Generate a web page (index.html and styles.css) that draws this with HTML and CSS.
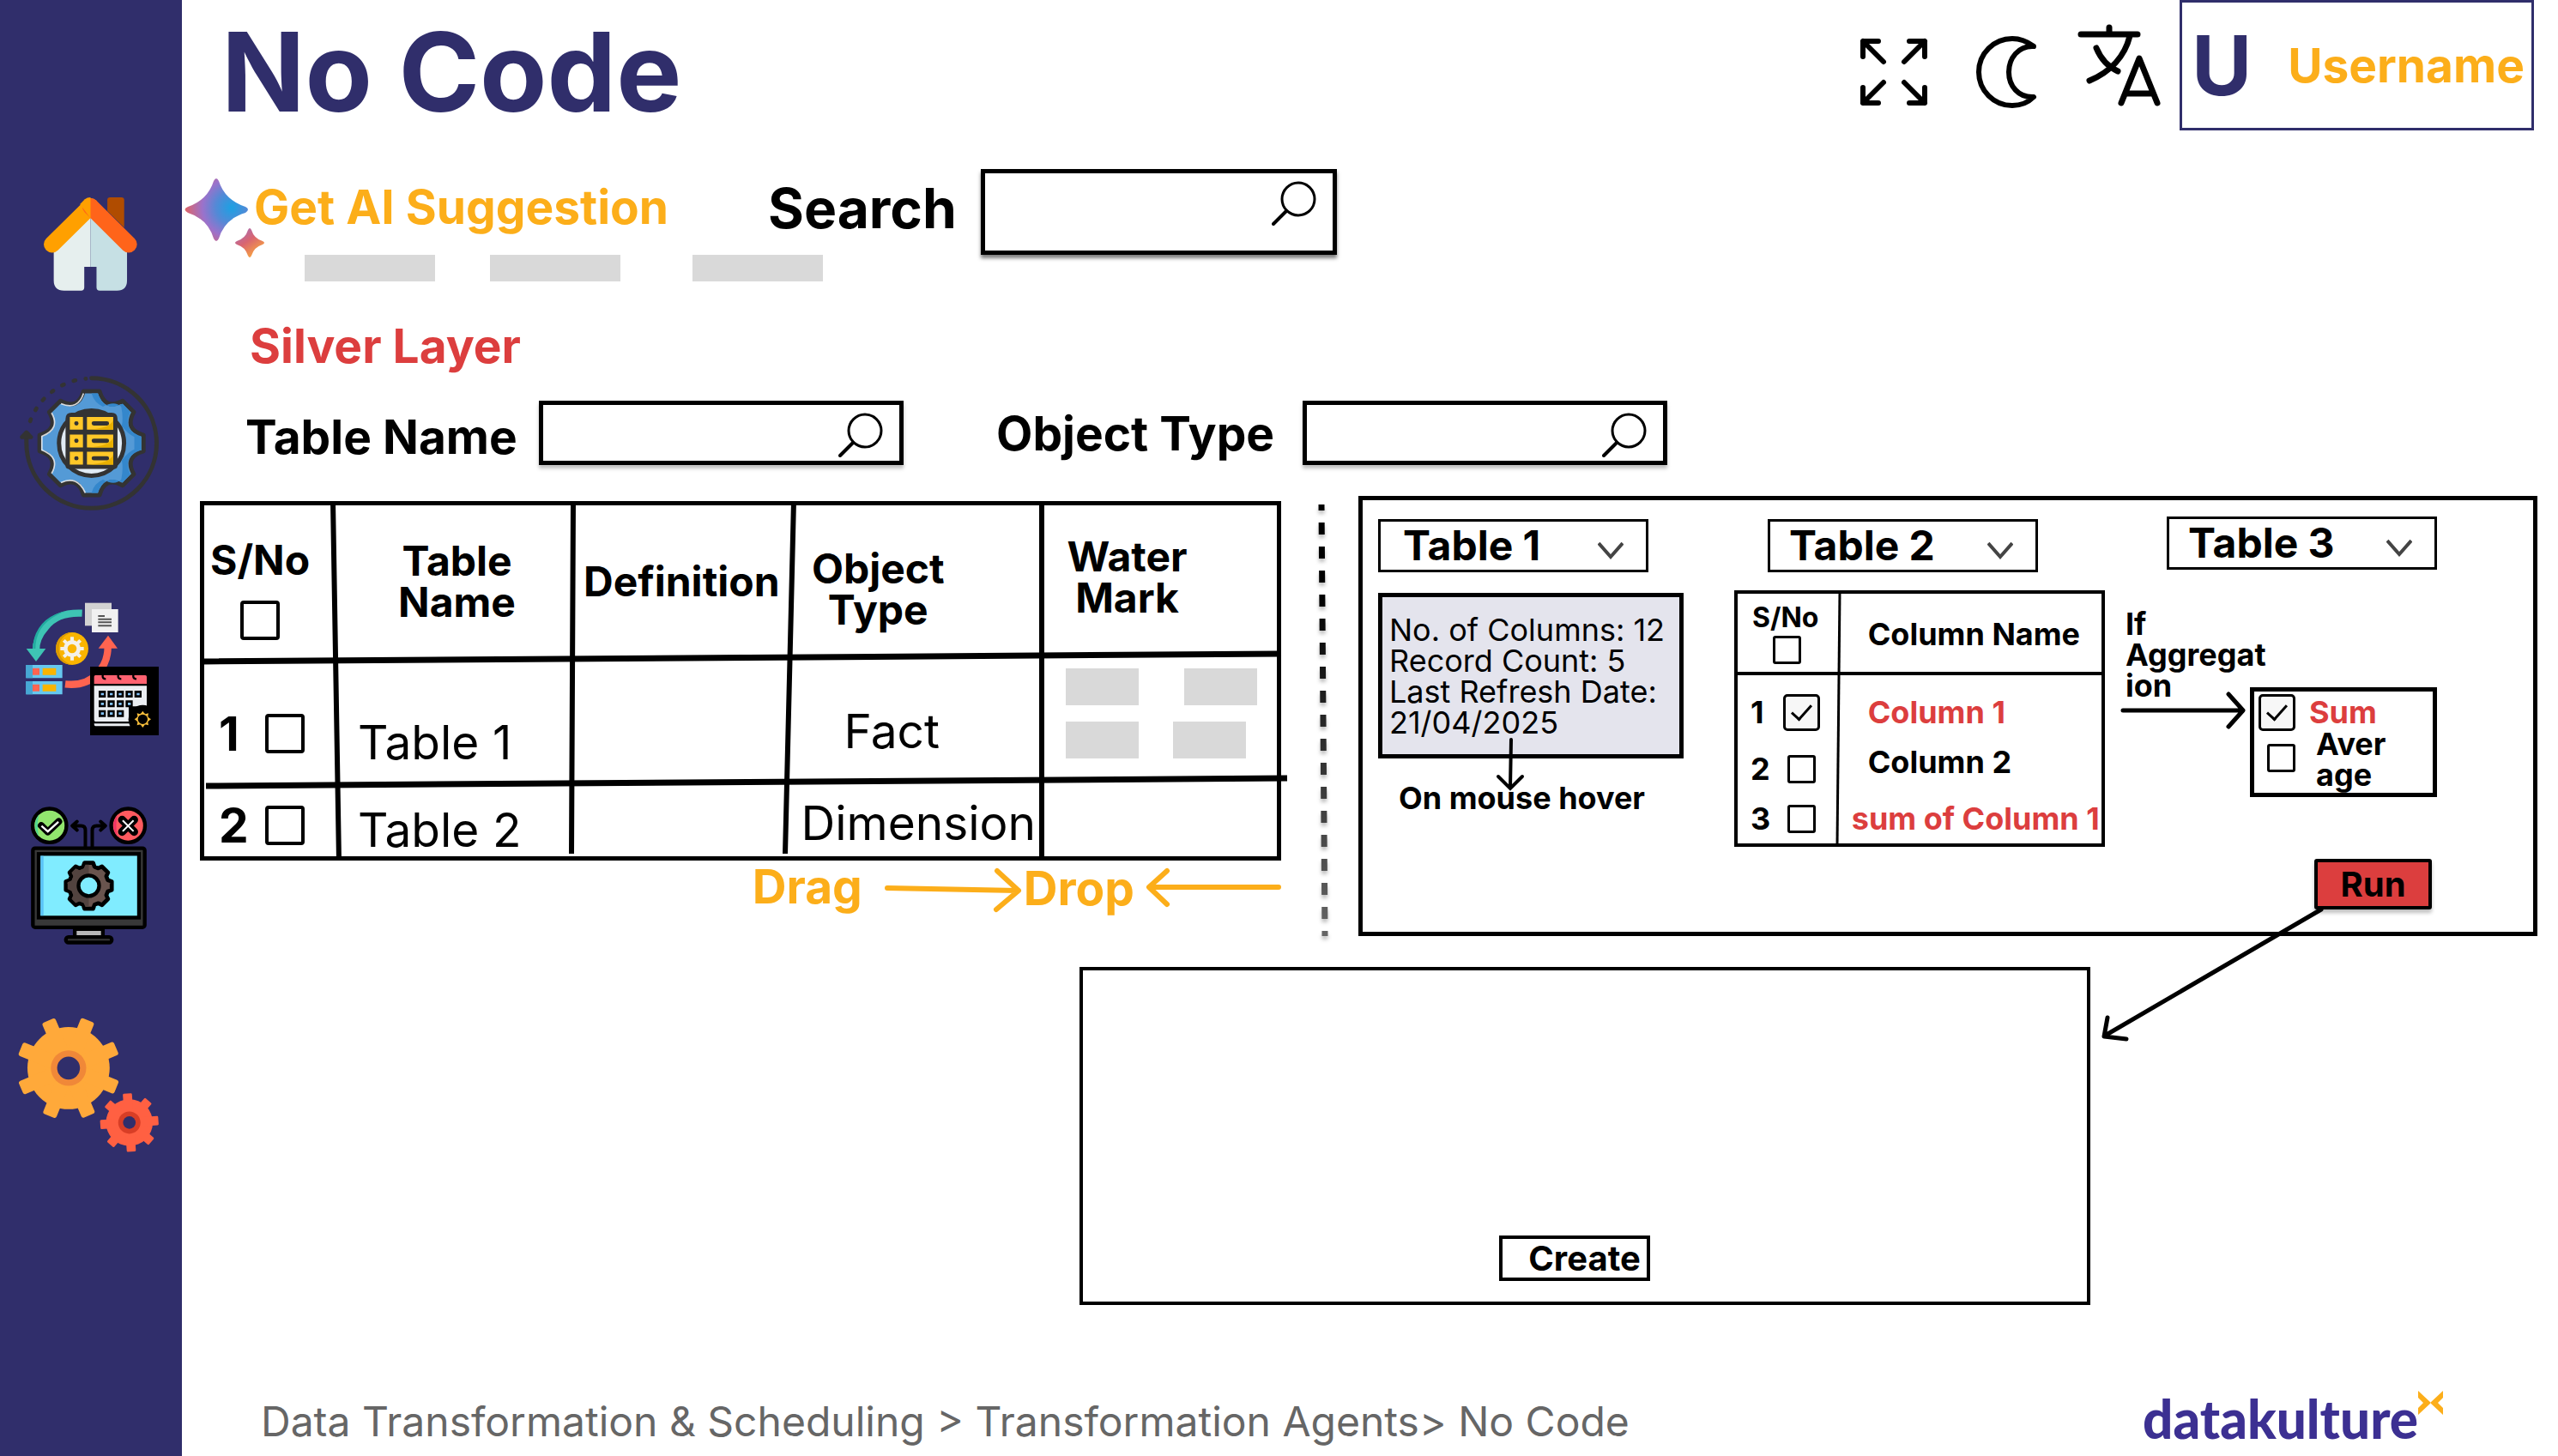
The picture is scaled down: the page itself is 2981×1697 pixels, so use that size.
FILE: index.html
```html
<!DOCTYPE html>
<html lang="en">
<head>
<meta charset="utf-8">
<title>No Code</title>
<meta name="viewport" content="width=device-width, initial-scale=1">
<link rel="stylesheet" href="styles.css">
</head>
<body>
<svg class="defs" aria-hidden="true">
  <defs>
    <symbol id="search" viewBox="0 0 52 52">
      <circle cx="31" cy="21" r="19" fill="none" stroke="#000" stroke-width="3"/>
      <path d="M17 35 2 50" fill="none" stroke="#000" stroke-width="4" stroke-linecap="round"/>
    </symbol>
    <symbol id="chevron" viewBox="0 0 30 24">
      <path d="M1 3 15 19 29 3" fill="none" stroke="#444" stroke-width="4"/>
    </symbol>
  </defs>
</svg>
<div class="app">
  <nav class="sidebar" aria-label="Main">
    <a href="#home" class="nav-link nav-home" aria-label="Home">
      <svg viewBox="153 150 328 328" width="109" height="109">
        <path d="M376 160q0-10 10-10h39q10 0 10 10v96l-59-58z" fill="#b04c00"/>
        <path d="M188 335 317 210V394H295V466Q295 477 284 477H224Q188 477 188 441z" fill="#e6efee"/>
        <path d="M445 335 317 210V394H338V466Q338 477 349 477H410Q445 477 445 441z" fill="#c6e0e4"/>
        <path d="M182 315 317 182" stroke="#ffa000" stroke-width="58" stroke-linecap="round"/>
        <path d="M317 182 451 315" stroke="#ff641a" stroke-width="58" stroke-linecap="round"/>
        <path d="M317 150Q305 150 297 157L280 174 317 224z" fill="#ffa000"/>
      </svg>
    </a>
    <a href="#data" class="nav-link nav-data" aria-label="Data">
      <svg viewBox="69 775 486 472" width="162" height="157">
        <path d="M320 783A228 228 0 1 1 92 1011V985" fill="none" stroke="#333" stroke-width="15" stroke-linecap="round"/>
        <path d="M76 990 92 973 108 990z" fill="#333" stroke="#333" stroke-width="14" stroke-linejoin="round"/>
        <path d="M105 934A228 228 0 0 1 300 785" fill="none" stroke="#333" stroke-width="14" stroke-linecap="round" stroke-dasharray="7 36"/>
        <g transform="translate(320 1011)">
          <path d="M-28-182H28Q47-114 109-148L148-109Q114-47 182-28V28Q114 47 148 109L109 148Q47 114 28 182H-28Q-47 114-109 148L-148 109Q-114 47-182 28V-28Q-114-47-148-109L-109-148Q-47-114-28-182z" fill="#549ad6" stroke="#333" stroke-width="15" stroke-linejoin="round"/>
          <path d="M0-174H22Q47-106 109-138L136-109Q106-47 174-24V24Q106 47 136 109L109 138Q47 106 22 174H0Q10 140 40 128Q80 150 104 128Q112 90 106 60Q130 30 150 22V-22Q130-30 106-60Q112-90 104-128Q80-150 40-128Q10-140 0-174z" fill="#3487cc"/>
          <path d="M-28-174Q-47-114-107-138M-140-106Q-108-50-174-24V24Q-108 50-140 106M-107 138Q-50 112-22 174" fill="none" stroke="#fff" stroke-width="5" opacity=".8"/>
          <circle r="114" fill="#e0ebf5" stroke="#333" stroke-width="15"/>
          <path d="M-91 78V-85Q-91-107-70-107H70Q91-107 91-85V78Q91 90 80 90H-80Q-91 90-91 78z" fill="#333"/>
        </g>
        <path d="M244 919h46v45h-46zM244 981h46v45h-46zM244 1041h46v45h-46zM304 919h92v45h-92zM304 981h92v45h-92zM304 1041h92v45h-92z" fill="#ffc828"/>
        <path d="M396 930v34h-90q80-4 90-34zM396 991v35h-90q80-4 90-35zM396 1051v35h-90q80-4 90-35z" fill="#e8b000"/>
        <path d="M328 942h46M328 1003h46M328 1064h46M267 942h.1M267 1003h.1M267 1064h.1" stroke="#333" stroke-width="15" stroke-linecap="round"/>
      </svg>
    </a>
    <a href="#schedule" class="nav-link nav-schedule" aria-label="Transformation and scheduling">
      <svg viewBox="90 66 465 465" width="155" height="155">
        <path d="M297 68h93v80h-93z" fill="#d2d2d2"/>
        <path d="M321 90h92v81h-92z" fill="#f1f1f1"/>
        <path d="M343 114h23M343 125h47M343 136h47M343 148h47" stroke="#555" stroke-width="6"/>
        <path d="M287 104Q200 100 160 152Q124 192 126 236" fill="none" stroke="#3ec4b4" stroke-width="25"/>
        <path d="M262 93Q160 100 126 174Q114 202 115 232H124Q122 150 200 110Q230 94 262 93z" fill="#22aca0"/>
        <path d="M92 228H160L126 273z" fill="#3ec4b4"/>
        <circle cx="252" cy="228" r="57" fill="#fab400"/>
        <path d="M252 171A57 57 0 0 0 252 285Q206 270 206 228T252 171z" fill="#dc9a00"/>
        <circle cx="252" cy="228" r="23" fill="none" stroke="#f4f1ea" stroke-width="14"/>
        <path d="M252 187v14M252 255v14M211 228h14M279 228h14M223 199l10 10M271 247l10 10M223 257l10-10M271 209l10-10" stroke="#f4f1ea" stroke-width="12"/>
        <path d="M228 352Q300 360 340 316Q378 276 377 220" fill="none" stroke="#ff6450" stroke-width="25"/>
        <path d="M344 227 378 182 411 227z" fill="#ff6450"/>
        <path d="M91 285H218V331H91zM91 342H218V388H91z" fill="#66c8f0"/>
        <path d="M91 285H114V331H91zM91 342H114V388H91z" fill="#46a8d4"/>
        <path d="M114 296h24v24h-24zM114 353h24v24h-24z" fill="#ff6450"/>
        <path d="M149 296h47v24h-47zM149 353h47v24h-47z" fill="#fab400"/>
        <path d="M315 291H555V531H315z" fill="#000"/>
        <path d="M329 326q0-5 5-5h174q5 0 5 5v25H329z" fill="#ff6270"/>
        <path d="M359 319v8q2 7 11 7M413 319v8q2 7 11 7M466 319v8q2 7 11 7" fill="none" stroke="#000" stroke-width="7"/>
        <path d="M329 358H513V430H450V483H334Q329 483 329 478zM329 490H455V499H334Q329 499 329 490z" fill="#ebeef2"/>
        <path d="M345 375h25v24h-25zM376 375h25v24h-25zM408 375h25v24h-25zM439 375h25v24h-25zM470 375h25v24h-25zM345 409h25v24h-25zM376 409h25v24h-25zM408 409h25v24h-25zM439 409h25v24h-25zM345 443h25v24h-25zM376 443h25v24h-25zM408 443h25v24h-25z" fill="#000"/>
        <path d="M353 383h10v8h-10zM384 383h10v8h-10zM415 383h10v8h-10zM447 383h10v8h-10zM478 383h10v8h-10zM353 417h10v8h-10zM384 417h10v8h-10zM415 417h10v8h-10zM447 417h10v8h-10zM353 451h10v8h-10zM384 451h10v8h-10zM415 451h10v8h-10z" fill="#82c4ff"/>
        <circle cx="499" cy="475" r="50" fill="#000"/>
        <circle cx="499" cy="475" r="19" fill="none" stroke="#fac03c" stroke-width="4"/>
        <path d="M492 456l7-10 7 10zM492 494l7 10 7-10zM480 468l-10 7 10 7zM518 468l10 7-10 7zM481 465l-2-11 11 3zM517 465l2-11-11 3zM481 485l-2 11 11-3zM517 485l2 11-11-3z" fill="#fac03c"/>
      </svg>
    </a>
    <a href="#monitor" class="nav-link nav-monitor" aria-label="Monitoring">
      <svg viewBox="107 779 404 481" width="135" height="161">
        <circle cx="172" cy="845" r="59" fill="#92e66e" stroke="#000" stroke-width="13"/>
        <path d="M135 806Q108 845 135 884Q126 845 135 806z" fill="#50d890"/>
        <path d="M143 845 166 867 204 831" fill="none" stroke="#000" stroke-width="24" stroke-linecap="round" stroke-linejoin="round"/>
        <path d="M144 846 166 866 203 832" fill="none" stroke="#fff" stroke-width="7"/>
        <circle cx="446" cy="845" r="59" fill="#ff5a5f" stroke="#000" stroke-width="13"/>
        <path d="M409 806Q382 845 409 884Q400 845 409 806z" fill="#f03264"/>
        <path d="M425 825 467 867M467 825 425 867" stroke="#000" stroke-width="28" stroke-linecap="round"/>
        <path d="M427 827 465 865M465 827 427 865" stroke="#fff" stroke-width="6"/>
        <path d="M297 925V862Q297 846 282 846H252M268 831 251 846 268 861M321 925V862Q321 846 336 846H366M350 831 367 846 350 861" fill="none" stroke="#000" stroke-width="12" stroke-linecap="round" stroke-linejoin="round"/>
        <rect x="114" y="924" width="390" height="276" rx="8" fill="#383838" stroke="#000" stroke-width="13"/>
        <rect x="134" y="944" width="350" height="222" fill="#80ecff" stroke="#000" stroke-width="13"/>
        <path d="M141 951h10v208h-10z" fill="#5ac4f8"/>
        <g transform="translate(309 1055)">
          <path d="M-20-66-15-80H15L20-66 33-61 46-67 67-46 61-33 66-20 80-15V15L66 20 61 33 67 46 46 67 33 61 20 66 15 80H-15L-20 66-33 61-46 67-67 46-61 33-66 20-80 15V-15L-66-20-61-33-67-46-46-67-33-61z" fill="#69544e" stroke="#000" stroke-width="14" stroke-linejoin="round"/>
          <path d="M0-74H-12L-18-60-33-54-46-60-60-46-54-33-60-18-74-12V12L-60 18-54 33-60 46-46 60-33 54-18 60-12 74H0z" fill="#52433f"/>
          <circle r="36" fill="#80ecff" stroke="#000" stroke-width="13"/>
        </g>
        <path d="M260 1206h98v28h-98z" fill="#b8b8b8" stroke="#000" stroke-width="13"/>
        <rect x="229" y="1234" width="160" height="19" rx="9" fill="#383838" stroke="#000" stroke-width="13"/>
      </svg>
    </a>
    <a href="#settings" class="nav-link nav-settings" aria-label="Settings">
      <svg viewBox="66 108 490 470" width="163" height="157">
        <defs>
          <g id="big-teeth"><rect x="-25" y="-181" width="50" height="362" rx="8"/></g>
          <g id="small-teeth"><rect x="-16" y="-102" width="32" height="204" rx="4"/></g>
        </defs>
        <g transform="translate(240 284)" fill="#ffa93a">
          <circle r="144"/>
          <use href="#big-teeth" transform="rotate(22)"/><use href="#big-teeth" transform="rotate(67)"/>
          <use href="#big-teeth" transform="rotate(112)"/><use href="#big-teeth" transform="rotate(157)"/>
          <circle r="62" fill="#f08838"/><circle r="40" fill="#302e6b"/>
        </g>
        <g transform="translate(453 475)" fill="#ff6042">
          <circle r="82"/>
          <use href="#small-teeth" transform="rotate(-4)"/><use href="#small-teeth" transform="rotate(41)"/>
          <use href="#small-teeth" transform="rotate(86)"/><use href="#small-teeth" transform="rotate(131)"/>
          <circle r="39" fill="#d83e26"/><circle r="22" fill="#302e6b"/>
        </g>
      </svg>
    </a>
  </nav>

  <main class="main">
    <header class="topbar">
      <h1 class="title">No Code</h1>
      <div class="actions">
        <button type="button" class="icon-button" aria-label="Full screen">
          <svg viewBox="0 0 78 78" width="78" height="78" fill="none" stroke="#000" stroke-width="6" stroke-linecap="round" stroke-linejoin="round">
            <path d="M21 3H3V21M3 3 27 27M57 3H75V21M75 3 51 27M21 75H3V57M3 75 27 51M57 75H75V57M75 75 51 51"/>
          </svg>
        </button>
        <button type="button" class="icon-button icon-moon" aria-label="Dark mode">
          <svg viewBox="0 0 72 84" width="72" height="84" fill="none" stroke="#000" stroke-width="6" stroke-linejoin="round">
            <path d="M67 12C59 6 50 3 42 3A39 39 0 0 0 42 81C50 81 60 78 67 71C49 72 38 58 38 42S49 11 67 12z"/>
          </svg>
        </button>
        <button type="button" class="icon-button icon-translate" aria-label="Language">
          <svg viewBox="0 0 97 97" width="97" height="97" fill="none" stroke="#000" stroke-width="7" stroke-linecap="round" stroke-linejoin="round">
            <path d="M4 12H70M37 4V12M61 14C55 38 38 56 14 66M22 28C27 40 36 50 47 55M51 92 72 40 93 92M58 81H86"/>
          </svg>
        </button>
        <button type="button" class="user"><span class="user-initial">U</span><span class="user-name">Username</span></button>
      </div>
    </header>

    <section class="toolbar">
      <a href="#suggestions" class="suggest">
        <svg class="sparkle" viewBox="0 0 92 92" width="92" height="92" aria-hidden="true">
          <defs>
            <radialGradient id="g1" gradientUnits="userSpaceOnUse" cx="54" cy="34" r="62">
              <stop offset="0" stop-color="#1ba1e3"/><stop offset=".3" stop-color="#5489d6"/><stop offset=".55" stop-color="#9b72cb"/><stop offset=".85" stop-color="#d96570"/><stop offset="1" stop-color="#f49c46"/>
            </radialGradient>
            <linearGradient id="g2" x1="0" y1="0" x2=".7" y2="1">
              <stop offset="0" stop-color="#9b72cb"/><stop offset=".5" stop-color="#d96570"/><stop offset=".9" stop-color="#f49c46"/>
            </linearGradient>
          </defs>
          <path d="M33 3Q36-3 39 3Q46 25 70 33Q76 36 70 40Q46 47 39 70Q36 76 33 70Q26 47 3 40Q-4 36 3 33Q26 25 33 3z" fill="url(#g1)"/>
          <path d="M73 60Q75 56 77 60Q80 70 90 73Q94 75 90 77Q80 80 77 90Q75 94 73 90Q70 80 60 77Q56 75 60 73Q70 70 73 60z" fill="url(#g2)"/>
        </svg>
        <span>Get AI Suggestion</span>
      </a>
      <label class="search-label" for="q">Search</label>
      <div class="field field-main">
        <input id="q" type="search">
        <svg class="field-icon" width="52" height="52" aria-hidden="true"><use href="#search"/></svg>
      </div>
    </section>
    <div class="chips"><span class="chip"></span><span class="chip"></span><span class="chip"></span></div>

    <h2 class="layer">Silver Layer</h2>

    <section class="filters">
      <label class="filter-label" for="f-name">Table Name</label>
      <div class="field">
        <input id="f-name" type="search">
        <svg class="field-icon" width="52" height="52" aria-hidden="true"><use href="#search"/></svg>
      </div>
      <label class="filter-label filter-type" for="f-type">Object Type</label>
      <div class="field">
        <input id="f-type" type="search">
        <svg class="field-icon" width="52" height="52" aria-hidden="true"><use href="#search"/></svg>
      </div>
    </section>

    <section class="work">
      <div class="source">
        <div class="sketch">
          <table class="tables">
            <colgroup><col class="c-no"><col class="c-name"><col class="c-def"><col class="c-type"><col class="c-mark"></colgroup>
            <thead>
              <tr>
                <th scope="col" class="no-head"><label for="all">S/No</label><input id="all" type="checkbox" class="box"></th>
                <th scope="col" class="name-head">Table<br>Name</th>
                <th scope="col">Definition</th>
                <th scope="col" class="type-head">Object<br>Type</th>
                <th scope="col" class="mark-head">Water<br>Mark</th>
              </tr>
            </thead>
            <tbody>
              <tr>
                <td><div class="pick"><label for="t1">1</label><input id="t1" type="checkbox" class="box"></div></td>
                <td class="name-cell">Table 1</td>
                <td></td>
                <td class="type-cell fact">Fact</td>
                <td class="mark-cell">
                  <div class="marks"><span></span><span></span></div>
                  <div class="marks marks-near"><span></span><span></span></div>
                </td>
              </tr>
              <tr>
                <td><div class="pick"><label for="t2">2</label><input id="t2" type="checkbox" class="box"></div></td>
                <td class="name-cell">Table 2</td>
                <td></td>
                <td class="type-cell">Dimension</td>
                <td></td>
              </tr>
            </tbody>
          </table>
          <svg class="rules" viewBox="0 0 1260 419" preserveAspectRatio="none" aria-hidden="true">
            <path d="M155 0 162 419M435 0 433 411M692 0 682 411M981 0V417" stroke="#000" stroke-width="6"/>
            <path d="M2 187 1260 178M7 332 1267 323" stroke="#000" stroke-width="7"/>
          </svg>
        </div>
        <div class="dragdrop">
          <span>Drag</span>
          <svg width="158" height="52" viewBox="0 0 158 52" fill="none" stroke="#fcae1a" stroke-width="6" aria-hidden="true"><path d="M1 24 152 27M129 4 154 27 128 49" stroke-linecap="round" stroke-linejoin="round"/></svg>
          <span class="drop">Drop</span>
          <svg width="157" height="52" viewBox="0 0 157 52" fill="none" stroke="#fcae1a" stroke-width="6" aria-hidden="true"><path d="M154 23H4M24 4 3 23 24 43" stroke-linecap="round" stroke-linejoin="round"/></svg>
        </div>
      </div>

      <svg class="divider" width="20" height="503" viewBox="0 0 20 503" aria-hidden="true">
        <defs><linearGradient id="fade" gradientUnits="userSpaceOnUse" x1="0" y1="0" x2="0" y2="503"><stop offset=".2"/><stop offset="1" stop-color="#666"/></linearGradient></defs>
        <path d="M7 0 11 503" fill="none" stroke="url(#fade)" stroke-width="7" stroke-dasharray="14 14" stroke-dashoffset="7"/>
      </svg>

      <div class="panel">
        <div class="panel-col">
          <div class="select"><select aria-label="First table"><option>Table 1</option></select><svg width="30" height="24" aria-hidden="true"><use href="#chevron"/></svg></div>
          <div class="info">
            No. of Columns: 12<br>Record Count: 5<br>Last Refresh Date:<br>21/04/2025
            <svg class="info-arrow" width="34" height="62" viewBox="0 0 34 62" fill="none" stroke="#000" stroke-width="4" stroke-linecap="round" aria-hidden="true"><path d="M18 2 17 58M3 45 17 59 31 45"/></svg>
          </div>
          <p class="hover-note">On mouse hover</p>
        </div>

        <div class="panel-col middle">
          <div class="select select-2"><select aria-label="Second table"><option>Table 2</option></select><svg width="30" height="24" aria-hidden="true"><use href="#chevron"/></svg></div>
          <div class="columns-wrap">
            <table class="columns">
              <colgroup><col class="k-no"><col></colgroup>
              <thead><tr><th scope="col" class="k-head"><label for="call">S/No</label><input id="call" type="checkbox" class="box small"></th><th scope="col">Column Name</th></tr></thead>
              <tbody>
                <tr class="first"><td><div class="pick"><label for="c1">1</label><input id="c1" type="checkbox" class="box tick" checked></div></td><td class="red">Column 1</td></tr>
                <tr><td><div class="pick"><label for="c2">2</label><input id="c2" type="checkbox" class="box small"></div></td><td class="raised">Column 2</td></tr>
                <tr><td><div class="pick"><label for="c3">3</label><input id="c3" type="checkbox" class="box small"></div></td><td class="red wide">sum of Column 1</td></tr>
              </tbody>
            </table>
            <svg class="rules" viewBox="0 0 432 299" preserveAspectRatio="none" aria-hidden="true"><path d="M123 2 120 297" stroke="#000" stroke-width="3"/><path d="M2 97H430" stroke="#000" stroke-width="4"/></svg>
          </div>
        </div>

        <div class="panel-col last">
          <div class="select select-3"><select aria-label="Third table"><option>Table 3</option></select><svg width="30" height="24" aria-hidden="true"><use href="#chevron"/></svg></div>
          <p class="aggregate">If<br>Aggregat<br>ion</p>
          <div class="agg-row">
            <svg class="agg-arrow" width="146" height="44" viewBox="0 0 146 44" fill="none" stroke="#000" stroke-width="5" aria-hidden="true"><path d="M3 22H142M126 3 143 22 126 41" stroke-linecap="round" stroke-linejoin="round"/></svg>
            <div class="options">
              <div class="option"><input id="sum" type="checkbox" class="box tick" checked><label for="sum" class="red">Sum</label></div>
              <div class="option option-avg"><input id="avg" type="checkbox" class="box small"><label for="avg">Aver<br>age</label></div>
            </div>
          </div>
          <div class="run-wrap">
            <button type="button" class="run">Run</button>
            <svg class="run-arrow" width="260" height="160" viewBox="0 0 260 160" fill="none" stroke="#000" stroke-width="5" stroke-linecap="round" stroke-linejoin="round" aria-hidden="true"><path d="M257 3 5 150M8 129 4 151 30 154"/></svg>
          </div>
        </div>
      </div>
    </section>

    <section class="result"><button type="button" class="create">Create</button></section>

    <footer class="footer">
      <nav class="crumbs" aria-label="Breadcrumb"><a href="#scheduling">Data Transformation &amp; Scheduling</a> &gt; <a href="#agents">Transformation Agents</a>&gt; <span>No Code</span></nav>
      <div class="brand"><span>datakulture</span><svg width="29" height="28" viewBox="0 0 29 28" aria-hidden="true"><path d="M0 0 15 14 0 28V20L6 14 0 8zM29 0 14 14 29 28V20L23 14 29 8z" fill="#fcae1a"/></svg></div>
    </footer>
  </main>
</div>
</body>
</html>
```

FILE: styles.css
```css
* { box-sizing: border-box; }

body {
  margin: 0;
  background: #fff;
  color: #000;
  font-family: Inter, "Liberation Sans", sans-serif;
  font-size: 36px;
  line-height: 36px;
}

h1, h2, p { margin: 0; }
a { color: inherit; text-decoration: none; }
svg { display: block; flex: none; overflow: visible; }
button, input, select { font: inherit; color: inherit; margin: 0; border-radius: 0; }
button { padding: 0; background: none; border: 0; }
.defs { position: absolute; width: 0; height: 0; }
.red { color: #dc3e3e; }

.app { display: flex; min-height: 100vh; }

/* Sidebar */
.sidebar {
  flex: none;
  width: 212px;
  padding-top: 230px;
  background: #302e6b;
  display: flex;
  flex-direction: column;
}
.nav-link { display: block; }
.nav-home { padding-left: 51px; }
.nav-data { padding-left: 23px; margin-top: 99px; }
.nav-schedule { padding-left: 30px; margin-top: 107px; }
.nav-monitor { padding-left: 36px; margin-top: 83px; }
.nav-settings { padding-left: 22px; margin-top: 85px; }

.main { flex: 1; min-width: 0; padding: 0 24px 12px 21px; }

/* Top bar */
.topbar { display: flex; justify-content: space-between; height: 168px; padding: 0 4px 0 25px; }
.title { font-size: 128px; line-height: 168px; font-weight: 700; color: #302e6b; white-space: nowrap; }
.actions { display: flex; align-items: flex-start; }
.icon-button { margin-top: 45px; }
.icon-moon { margin: 42px 0 0 57px; }
.icon-translate { margin: 28px 22px 0 46px; }
.user {
  display: flex;
  align-items: center;
  justify-content: space-between;
  width: 413px;
  height: 152px;
  padding: 0 8px 0 11px;
  border: 3px solid #302e6b;
}
.user-initial { font-size: 96px; line-height: 96px; font-weight: 700; color: #302e6b; }
.user-name { font-size: 55px; line-height: 56px; font-weight: 700; color: #fcae1a; }

/* Search */
.toolbar { display: flex; align-items: flex-start; height: 100px; margin-top: 29px; }
.suggest {
  display: flex;
  flex: none;
  width: 665px;
  margin-left: -17px;
  font-size: 55px;
  line-height: 88px;
  font-weight: 700;
  color: #fcae1a;
  white-space: nowrap;
}
.sparkle { margin: 11px -12px 0 0; }
.search-label { flex: none; width: 262px; padding-left: 14px; font-size: 64px; line-height: 92px; font-weight: 700; }
.field { position: relative; width: 425px; height: 75px; }
.field input {
  display: block;
  width: 100%;
  height: 100%;
  padding: 0 80px 0 16px;
  border: 5px solid #000;
  background: #fff;
  box-shadow: 0 4px 4px rgba(0, 0, 0, .25);
  appearance: none;
  outline: 0;
}
.field-icon { position: absolute; right: 24px; top: 14px; }
.field-main { width: 415px; height: 100px; }
.field-main input { box-shadow: 0 4px 4px rgba(0, 0, 0, .5); }

.chips { display: flex; padding-left: 122px; }
.chip { width: 152px; height: 31px; margin-right: 64px; background: #d9d9d9; }
.chip:nth-child(2) { margin-right: 84px; }

.layer { margin: 47px 0 0 58px; font-size: 55px; line-height: 56px; font-weight: 700; color: #dc3e3e; }

.filters { display: flex; height: 75px; margin-top: 36px; padding-left: 53px; }
.filter-label { width: 342px; font-size: 55px; line-height: 84px; font-weight: 700; white-space: nowrap; }
.filter-type { width: 357px; margin-left: 108px; line-height: 76px; }

/* Work area */
.work {
  display: grid;
  grid-template-columns: minmax(0, 1260fr) 90px minmax(0, 1374fr);
  align-items: start;
  margin-top: 36px;
}
.source { padding-top: 6px; }
.sketch { position: relative; }
.rules { position: absolute; inset: 0; width: 100%; height: 100%; pointer-events: none; }

.tables {
  width: 100%;
  table-layout: fixed;
  border-collapse: separate;
  border-spacing: 0;
  border: 5px solid #000;
  font-size: 55px;
  line-height: 56px;
}
.c-no { width: 12%; }
.c-name { width: 22%; }
.c-def { width: 21%; }
.c-type { width: 23%; }
.tables th, .tables td { padding: 0; white-space: nowrap; }
.tables th { height: 178px; font-size: 48px; line-height: 48px; font-weight: 700; }
.tables tbody tr:first-child td { height: 145px; }
.tables tbody tr:last-child td { height: 86px; }
.tables .no-head { padding-top: 18px; }
.no-head label { display: block; padding-left: 7px; text-align: left; }
.no-head .box { margin: 23px 0 0 42px; }
.tables .name-head { padding-left: 14px; }
.tables .type-head { padding: 18px 92px 0 0; }
.tables .mark-head { padding: 0 74px 10px 0; }
.pick { display: flex; align-items: center; }
.pick label { flex: none; font-weight: 700; }
.tables .pick { padding: 30px 0 0 17px; }
.tables tr:last-child .pick { padding-top: 14px; }
.tables .pick label { width: 54px; }
.tables .name-cell { padding: 50px 0 0 29px; }
.tables tr:last-child .name-cell { padding-top: 24px; }
.tables .type-cell { padding: 8px 0 0 8px; }
.tables .fact { padding: 24px 0 0 58px; }
.tables .mark-cell { padding-bottom: 16px; }
.marks { display: flex; gap: 53px; margin-left: 29px; }
.marks span { width: 85px; height: 43px; background: #d9d9d9; }
.marks-near { gap: 40px; margin-top: 19px; }

.box {
  display: block;
  flex: none;
  width: 46px;
  height: 46px;
  border: 4px solid #000;
  border-radius: 4px;
  background: #fff;
  appearance: none;
}
.box.small { width: 33px; height: 33px; border-width: 3px; border-radius: 3px; }
.box.tick { display: grid; place-items: center; width: 43px; height: 43px; border-width: 3px; border-radius: 5px; background: #f7f7f7; }
.box.tick::after {
  content: "";
  width: 10px;
  height: 20px;
  margin-top: -6px;
  border: solid #000;
  border-width: 0 3px 3px 0;
  transform: rotate(42deg);
}

.dragdrop {
  display: flex;
  align-items: center;
  justify-content: flex-end;
  height: 60px;
  font-size: 55px;
  line-height: 56px;
  font-weight: 700;
  color: #fcae1a;
}
.dragdrop span { margin-right: 28px; }
.dragdrop svg { margin-top: 8px; }
.dragdrop .drop { margin: 4px 14px 0 2px; }

.divider { margin: 10px 0 0 40px; filter: drop-shadow(0 4px 2px rgba(0, 0, 0, .25)); }

/* Join panel */
.panel {
  display: grid;
  grid-template-columns: minmax(0, 356fr) minmax(0, 59fr) minmax(0, 432fr) minmax(0, 18fr) minmax(0, 369fr);
  height: 513px;
  padding: 0 112px 0 18px;
  border: 5px solid #000;
  font-weight: 700;
}
.panel-col { padding-top: 22px; }
.middle { grid-column: 3; }
.last { grid-column: 5; padding-top: 19px; }
.select { position: relative; width: 315px; height: 62px; }
.select select {
  width: 100%;
  height: 100%;
  padding: 0 0 0 26px;
  border: 3px solid #000;
  background: #fff;
  font-size: 48px;
  line-height: 56px;
  font-weight: 700;
  appearance: none;
}
.select svg { position: absolute; right: 29px; top: 25px; }
.select-2 { margin-left: 39px; }
.select-2 select, .select-3 select { padding-left: 22px; }
.select-3 { margin-left: 54px; }

.info {
  position: relative;
  margin-top: 24px;
  height: 193px;
  padding: 20px 0 0 8px;
  border: 5px solid #000;
  background: #e4e4ed;
  font-weight: 400;
  white-space: nowrap;
}
.info-arrow { position: absolute; left: 132px; top: 164px; }
.hover-note { margin-top: 28px; padding-left: 24px; white-space: nowrap; }

.columns-wrap { position: relative; margin-top: 21px; }
.columns {
  width: 100%;
  table-layout: fixed;
  border-collapse: separate;
  border-spacing: 0;
  border: 4px solid #000;
}
.k-no { width: 28%; }
.columns th, .columns td { height: 58px; padding: 0 0 0 33px; font-weight: 700; text-align: left; white-space: nowrap; }
.columns th { height: 93px; }
.columns .first td { height: 82px; padding-top: 8px; }
.columns td:first-child { padding-left: 15px; }
.columns .k-head { padding: 0 0 0 17px; font-size: 32px; line-height: 32px; }
.k-head label { display: block; }
.k-head .box { margin: 5px 0 0 24px; }
.columns .pick label { width: 43px; }
.columns .pick .tick { margin-left: -5px; }
.columns .raised { padding-bottom: 16px; }
.columns .wide { padding-left: 14px; }

.aggregate { margin-top: 45px; padding-left: 6px; }
.agg-row { display: flex; justify-content: space-between; margin-top: -16px; }
.agg-arrow { margin-top: 5px; }
.options { width: 218px; height: 128px; padding: 3px 0 0 5px; border: 5px solid #000; }
.option { display: flex; align-items: center; height: 42px; gap: 16px; }
.option-avg { height: 68px; gap: 24px; padding-left: 10px; }
.option-avg .box { margin-top: -4px; }
.run-wrap { position: relative; width: 137px; margin: 72px 6px 0 auto; }
.run {
  display: block;
  width: 137px;
  height: 59px;
  border: 4px solid #000;
  border-radius: 3px;
  background: #dc3e3e;
  box-shadow: 0 4px 4px rgba(0, 0, 0, .25);
  font-size: 40px;
  line-height: 48px;
  font-weight: 700;
}
.run-arrow { position: absolute; right: 126px; top: 56px; }

/* Result */
.result {
  display: flex;
  align-items: flex-end;
  justify-content: center;
  min-height: 394px;
  margin: 36px 521px 0 1025px;
  padding: 0 24px 24px 0;
  border: 4px solid #000;
}
.create { width: 176px; height: 53px; padding-left: 23px; border: 4px solid #000; font-size: 40px; line-height: 45px; font-weight: 700; }

/* Footer */
.footer { display: flex; justify-content: space-between; height: 64px; margin-top: 112px; padding: 0 110px 0 71px; }
.crumbs { font-size: 48px; line-height: 48px; color: #666; white-space: nowrap; }
.brand { display: flex; margin-top: -12px; font-family: Lato, Inter, sans-serif; font-size: 62px; line-height: 64px; font-weight: 900; color: #3c3092; }
```
